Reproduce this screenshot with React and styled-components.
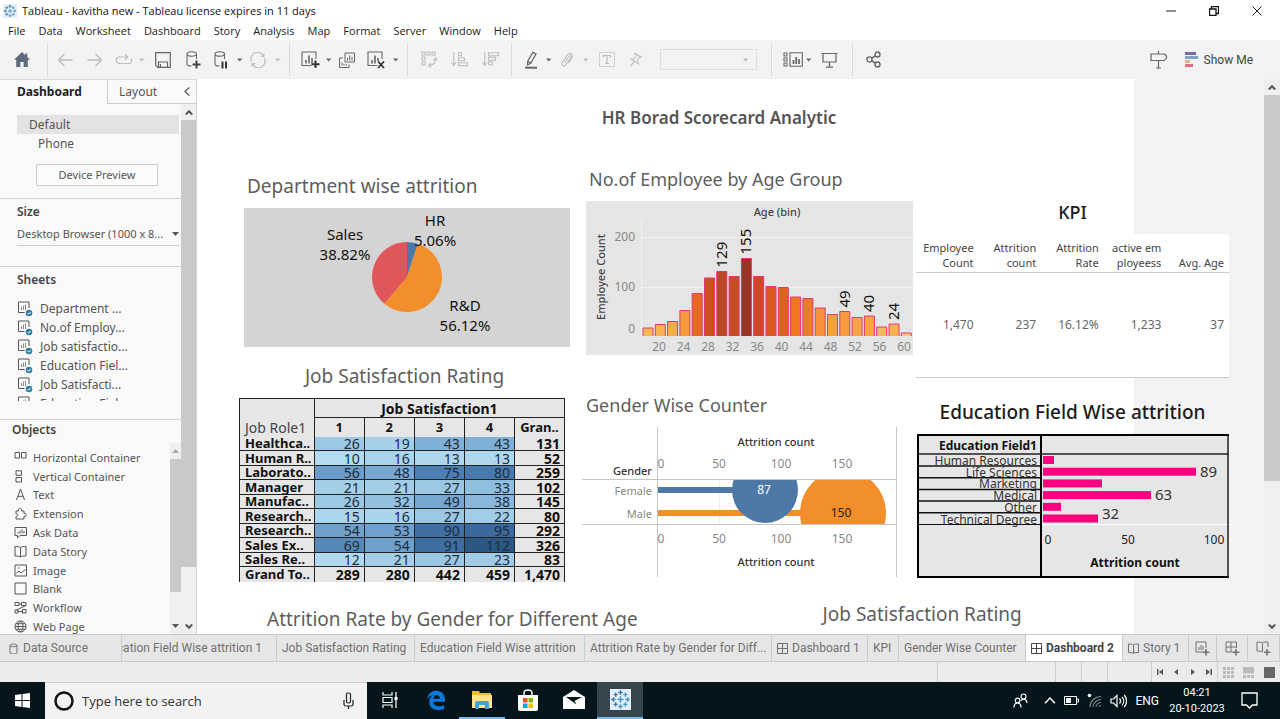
import React from "react";
import styled, { createGlobalStyle, css } from "styled-components";

const UI = `"Noto Sans", "Open Sans", sans-serif`;
const NARROW = `Roboto, "Liberation Sans", sans-serif`;

const GlobalStyle = createGlobalStyle`
  * { box-sizing: border-box; }
  html, body, #root { height: 100%; margin: 0; }
  body { font-family: ${UI}; font-size: 12px; color: #444; background: #fff; overflow: hidden; }
  button { font: inherit; color: inherit; background: none; border: 0; padding: 0; margin: 0; }
  h1, h2, h3, ul { margin: 0; padding: 0; font-weight: 400; }
  ul { list-style: none; }
  svg { display: block; flex: none; }
`;

const Window = styled.div`
  display: flex;
  flex-direction: column;
  height: 100vh;
`;

/* ---------- title bar and menu ---------- */

const TitleBar = styled.header`
  display: flex;
  align-items: center;
  height: 22px;
  padding: 0 4px 0 3px;
  gap: 5px;
  font-family: "Open Sans", sans-serif;
  font-size: 11px;
  line-height: 22px;
  color: #111;
`;

const TitleText = styled.span`
  flex: 1;
`;

const WindowButton = styled.button`
  display: flex;
  justify-content: center;
  width: 38px;
`;

const MenuBar = styled.nav`
  display: flex;
  height: 18px;
  padding-left: 8px;
  gap: 13px;
  font-family: "Open Sans", sans-serif;
  font-size: 11px;
  line-height: 18px;
  color: #222;
`;

/* ---------- toolbar ---------- */

const Toolbar = styled.div`
  display: flex;
  align-items: center;
  height: 39px;
  padding-right: 27px;
  background: #f3f3f3;
`;

const ToolButton = styled.button`
  display: flex;
  align-items: center;
  justify-content: center;
  width: ${(p) => p.$w}px;
  height: 30px;
  color: ${(p) => (p.$off ? "#bdbdbd" : "#666")};
`;

const Separator = styled.span`
  display: flex;
  justify-content: center;
  width: ${(p) => p.$w}px;
  height: 33px;
  &::before {
    content: "";
    width: 1px;
    background: #dadada;
  }
`;

const FitSelect = styled.select`
  appearance: none;
  width: 97px;
  height: 21px;
  margin: 0 -14px 0 13px;
  border: 1px solid #d6d6d6;
  background: #f3f3f3;
`;

const SelectCaret = styled.span`
  width: 18px;
  color: #b8b8b8;
  z-index: 1;
  pointer-events: none;
`;

const Spacer = styled.span`
  flex: 1;
`;

const ShowMe = styled.button`
  display: flex;
  align-items: center;
  gap: 6px;
  margin-left: 16px;
  font-family: ${NARROW};
  font-size: 12px;
  color: #444;
`;

/* ---------- body ---------- */

const Body = styled.div`
  display: flex;
  flex: 1;
  min-height: 0;
`;

const Sidebar = styled.aside`
  display: flex;
  flex-direction: column;
  width: 197px;
  border-right: 1px solid #d0d0d0;
  border-top: 1px solid #dcdcdc;
  background: #f9f9f9;
  color: #555;
`;

const SideTabs = styled.div`
  display: flex;
  height: 24px;
  flex: none;
`;

const SideTab = styled.button`
  padding-left: ${(p) => (p.$active ? 17 : 11)}px;
  width: ${(p) => (p.$active ? 107 : 70)}px;
  text-align: left;
  font-size: 12px;
  font-weight: ${(p) => (p.$active ? 700 : 400)};
  line-height: 22px;
  color: ${(p) => (p.$active ? "#222" : "#555")};
  ${(p) =>
    !p.$active &&
    css`
      border-left: 1px solid #ccc;
      border-bottom: 1px solid #ccc;
    `}
`;

const CollapseButton = styled.button`
  display: flex;
  align-items: center;
  justify-content: center;
  flex: 1;
  border-bottom: 1px solid #ccc;
`;

const SideScroll = styled.div`
  display: flex;
  flex: 1;
  min-height: 0;
`;

const SideContent = styled.div`
  display: flex;
  flex-direction: column;
  width: 181px;
  min-height: 0;
`;

const SideSection = styled.section`
  flex: none;
  height: ${(p) => p.$h}px;
  padding: ${(p) => p.$top}px 2px 0 17px;
  border-bottom: 1px solid #d0d0d0;
`;

const SideHeading = styled.h2`
  font-size: 12px;
  line-height: 20px;
  font-weight: 600;
  color: #444;
`;

const DeviceRow = styled.button`
  display: block;
  width: 100%;
  height: 19px;
  line-height: 19px;
  padding-left: ${(p) => (p.$active ? 12 : 21)}px;
  text-align: left;
  background: ${(p) => (p.$active ? "#e3e3e3" : "none")};
`;

const PreviewButton = styled.button`
  display: block;
  width: 122px;
  height: 22px;
  margin: 11px 0 0 19px;
  border: 1px solid #ccc;
  border-radius: 1px;
  background: #fcfcfc;
  font-size: 11px;
  line-height: 18px;
`;

const SizeField = styled.div`
  display: flex;
  align-items: center;
  height: 24px;
  border-bottom: 1px solid #ccc;
`;

const SizeSelect = styled.select`
  appearance: none;
  flex: 1;
  min-width: 0;
  border: 0;
  padding: 0;
  background: none;
  font-family: ${UI};
  font-size: 11px;
  color: #555;
`;

const SheetList = styled.ul`
  height: 102px;
  margin-top: 9px;
  overflow: hidden;
`;

const SheetItem = styled.li`
  display: flex;
  align-items: center;
  height: 19px;
  gap: 7px;
  line-height: 19px;
`;

const Objects = styled.section`
  display: flex;
  flex: 1;
  min-height: 0;
`;

const ObjectsMain = styled.div`
  flex: 1;
  padding-left: 12px;
  overflow: hidden;
`;

const ObjectList = styled.ul`
  display: grid;
  grid-auto-rows: 1fr;
  height: 188px;
  margin-top: 8px;
`;

const ObjectItem = styled.li`
  display: flex;
  align-items: center;
  padding-left: 2px;
  gap: 6px;
  font-size: 11px;
  line-height: 15px;
`;

const ScrollTrack = styled.div`
  display: flex;
  flex-direction: column;
  width: ${(p) => p.$w}px;
  margin-top: ${(p) => p.$top || 0}px;
  background: #efefef;
`;

const ScrollArrow = styled.button`
  display: flex;
  align-items: center;
  justify-content: center;
  height: 16px;
  color: #555;
`;

const ScrollThumb = styled.div`
  flex: ${(p) => p.$size};
  background: #c9c9c9;
`;

const ScrollRest = styled.div`
  flex: ${(p) => p.$size};
`;

/* ---------- dashboard ---------- */

const Canvas = styled.main`
  flex: 1;
  min-width: 0;
  padding: 0 35px 0 42px;
  overflow: hidden;
  background: linear-gradient(to right, #fff 87.8%, #f3f3f3 87.8%);
`;

const DashTitle = styled.h1`
  padding: 26px 30px 0 0;
  text-align: center;
  font-size: 17px;
  line-height: 26px;
  font-weight: 600;
  color: #555;
`;

const Columns = styled.div`
  display: grid;
  grid-template-columns: 343fr 334fr 313fr;
  height: 461px;
`;

const Column = styled.div`
  padding: ${(p) => p.$top}px ${(p) => p.$right}px 0 0;
  min-width: 0;
`;

const SheetTitle = styled.h2`
  height: 44px;
  padding-left: ${(p) => p.$indent || 0}px;
  margin-top: ${(p) => p.$gap || 0}px;
  text-align: ${(p) => (p.$center ? "center" : "left")};
  font-size: ${(p) => (p.$small ? 18 : 19)}px;
  line-height: 44px;
  font-weight: ${(p) => (p.$strong ? 500 : 400)};
  color: ${(p) => (p.$strong ? "#1c1c1c" : "#5e5e5e")};
  white-space: nowrap;
`;

const Chart = styled.svg`
  width: 100%;
  height: auto;
  font-family: ${UI};
`;

const ChartCard = styled.div`
  padding-left: ${(p) => p.$left}px;
`;

const KpiTable = styled.table`
  width: 100%;
  table-layout: fixed;
  border-collapse: collapse;
  background: #fff;
  font-size: 12px;
  line-height: 15px;
  color: #444;
  border-bottom: 1px solid #ccc;
  th, td {
    padding: 0 5px 0 0;
    text-align: right;
    font-weight: 400;
  }
  th {
    height: 38px;
    padding-bottom: 2px;
    vertical-align: bottom;
    border-bottom: 1px solid #ccc;
    font-size: 11px;
    white-space: pre-line;
  }
  td { height: 105px; color: #666; }
`;

const RatingTable = styled.table`
  width: calc(100% - 5px);
  table-layout: fixed;
  border-collapse: collapse;
  background: #e6e6e6;
  font-size: 14px;
  line-height: 13px;
  color: #222;
  th, td {
    height: 14px;
    padding: 0 4px 0 0;
    border: 1px solid #222;
    text-align: right;
    white-space: nowrap;
  }
  tbody tr:nth-child(even) th, tbody tr:nth-child(even) td { height: 15px; }
  thead th { height: 19px; text-align: center; padding: 0; font-size: 13px; font-weight: 700; color: #111; }
  thead th[colspan] { font-size: 14px; }
  tbody th { padding: 0 0 0 5px; text-align: left; font-size: 13px; font-weight: 700; color: #111; }
  tbody tr:first-child th, tbody tr:first-child td { border-top: 0; }
  tbody tr:last-child th, tbody tr:last-child td { border-bottom: 0; }
  thead tr:last-child th { border-bottom: 0; }
  thead th:first-child[rowspan] {
    vertical-align: bottom;
    text-align: left;
    padding: 0 0 3px 5px;
    font-size: 14px;
    font-weight: 400;
    color: #444;
    border-bottom: 0;
  }
`;

const RatingCell = styled.td`
  background: ${(p) => p.$bg};
  color: #1e2c3c;
`;

const TotalCell = styled.td`
  font-weight: 700;
  color: #111;
`;

const LowerTitles = styled.div`
  display: flex;
  gap: 185px;
  padding-left: 28px;
`;

/* ---------- sheet tabs and status ---------- */

const SheetTabs = styled.div`
  display: grid;
  grid-template-columns: 122fr 155fr 138fr 170fr 187fr 96fr 31fr 127fr 97fr 66fr 28fr 31fr 32fr;
  height: 28px;
  flex: none;
  border-top: 1px solid #c8c8c8;
  border-bottom: 1px solid #c8c8c8;
  background: #e6e6e6;
  font-family: ${NARROW};
  font-size: 12px;
  color: #666;
`;

const SheetTab = styled.button`
  display: flex;
  align-items: center;
  justify-content: ${(p) => (p.$clip ? "flex-end" : p.$iconOnly ? "center" : "flex-start")};
  min-width: 0;
  gap: 4px;
  padding: 0 ${(p) => (p.$clip ? 14 : 0)}px 0 ${(p) => (p.$iconOnly || p.$clip ? 0 : p.$first ? 8 : 5)}px;
  overflow: hidden;
  white-space: nowrap;
  border-right: 1px solid #cacaca;
  background: ${(p) => (p.$active ? "#fff" : "none")};
  font-weight: ${(p) => (p.$active ? 700 : 400)};
  color: ${(p) => (p.$active ? "#444" : "#707070")};
`;

const StatusBar = styled.div`
  display: flex;
  justify-content: flex-end;
  height: 20px;
  flex: none;
  background: #ebebeb;
  color: #555;
`;

const StatusCell = styled.div`
  display: flex;
  align-items: center;
  justify-content: space-around;
  width: ${(p) => p.$w}px;
  border-left: 1px solid #cfcfcf;
`;

/* ---------- taskbar ---------- */

const Taskbar = styled.footer`
  display: flex;
  align-items: stretch;
  height: 37px;
  flex: none;
  background: #04151b;
  color: #fff;
`;

const StartButton = styled.button`
  display: flex;
  align-items: center;
  justify-content: center;
  width: 45px;
`;

const SearchBox = styled.label`
  display: flex;
  align-items: center;
  width: 322px;
  padding: 0 12px 0 9px;
  gap: 8px;
  border-top: 1px solid #ccc;
  background: #f2f2f2;
`;

const SearchInput = styled.input`
  flex: 1;
  min-width: 0;
  border: 0;
  padding: 0;
  background: none;
  font-family: "Open Sans", sans-serif;
  font-size: 13px;
  &::placeholder { color: #333; opacity: 1; }
`;

const TaskButton = styled.button`
  display: flex;
  align-items: center;
  justify-content: center;
  width: 46px;
  border-bottom: 2px solid ${(p) => (p.$open ? "#76b9ed" : "transparent")};
  background: ${(p) => (p.$active ? "#36464c" : "none")};
  background-clip: padding-box;
`;

const Tray = styled.div`
  display: flex;
  align-items: center;
  gap: 8px;
  padding-right: 22px;
  font-family: ${NARROW};
  font-size: 12px;
`;

const Clock = styled.time`
  width: 58px;
  margin: 0 7px 0 1px;
  text-align: center;
  font-size: 11px;
  line-height: 16px;
`;

/* ---------- icons ---------- */

const Icon = ({ w = 18, h = w, children, sw = 1, fill = "none" }) => (
  <svg width={w} height={h} viewBox={`0 0 ${w} ${h}`} fill={fill} stroke="currentColor" strokeWidth={sw} aria-hidden="true">
    {children}
  </svg>
);

const Caret = () => (
  <Icon w={6} h={4}><path d="M0 .5h5.4L2.7 3.6z" fill="currentColor" stroke="none" /></Icon>
);

const crosses = [[8, 8, 2.4], [8, 2.6, 1.7], [8, 13.4, 1.7], [2.6, 8, 1.7], [13.4, 8, 1.7], [4.3, 4.3, 1.6], [11.7, 4.3, 1.6], [4.3, 11.7, 1.6], [11.7, 11.7, 1.6]];
const TableauLogo = ({ size = 14 }) => (
  <svg width={size} height={size} viewBox="0 0 16 16" aria-hidden="true">
    <rect width="16" height="16" fill="#e4eef6" />
    {crosses.map(([x, y, r], i) => (
      <path key={i} d={`M${x - r} ${y}h${2 * r}M${x} ${y - r}v${2 * r}`} stroke={i % 2 ? "#3f7ca8" : "#4a98c9"} strokeWidth="1.1" />
    ))}
  </svg>
);

const HomeIcon = () => (
  <Icon w={18} h={16}><path d="M9 0 1 7.8h2.2V15h4.2v-5h3.2v5h4.2V7.8H17L14.300 5.100V1.500h-2v1.700z" fill="#5d6b7c" stroke="none" /></Icon>
);
const BackIcon = () => <Icon w={16} h={14} sw={1.4}><path d="M15.500 7H1.500M7.500 1 1.500 7l6 6" /></Icon>;
const ForwardIcon = () => <Icon w={16} h={14} sw={1.4}><path d="M.5 7h14M8.500 1l6 6-6 6" /></Icon>;
const ReplayIcon = () => (
  <Icon w={18} h={12} sw={1.2}><path d="M12 3H4.500a3.200 3.200 0 0 0 0 6.500H14a3 3 0 0 0 2-5M10 .5 12.600 3 10 5.500" /></Icon>
);
const SaveIcon = () => (
  <Icon w={16} sw={1.200}><path d="M.7.7h14.600v14.600H2.700L.7 13.300zM3.500 15v-5h9v5M5.500 12v3M.7 13.300l2 2" /></Icon>
);
const DbPath = "M1 3c0-3 9.500-3 9.500 0s-9.500 3-9.500 0v10c0 1.200 2 2 4.500 2M10.500 3v5";
const DbAddIcon = () => (
  <Icon w={15} h={18} sw={1.1}><path d={DbPath} /><path d="M10.500 9.500v8M6.500 13.500h8" stroke="#444" strokeWidth="2" /></Icon>
);
const DbPauseIcon = () => (
  <Icon w={14} h={18} sw={1.1}><path d={DbPath} /><path d="M8.500 10.500v7M12 10.500v7" stroke="#333" strokeWidth="2" /></Icon>
);
const RefreshIcon = () => (
  <Icon w={16} sw={1.2}><path d="M1.500 9.500A6.500 6.500 0 0 1 13.500 4M14.500 6.500A6.500 6.500 0 0 1 2.500 12" /><path d="M14.500 1v4h-4zM1.500 15v-4h4z" fill="currentColor" stroke="none" /></Icon>
);
const NewSheetIcon = () => (
  <Icon w={19} h={18} sw={1.1}><path d="M15 8V1H1v13.500h9.500" /><path d="M5 12.500V9M8 12.500V4.500M11 12.500V7" strokeWidth="1.600" /><path d="M14.500 9.500v7.500M10.500 13.300h8" stroke="#333" strokeWidth="2" /></Icon>
);
const DuplicateIcon = () => (
  <Icon w={16} sw={1}><path d="M6 1h9.500v9H6zM4 6H.5v9.500h9.500v-3" /><path d="M8.500 8.500V6M10.700 8.500V3.500M13 8.500V5M3 13.500v-3M5 13.500v-1.500M7.300 13.500v-1.500" /></Icon>
);
const ClearIcon = () => (
  <Icon w={19} h={18} sw={1.1}><path d="M15 8V1H1v13.500h9.500" /><path d="M5 12.500V9M8 12.500V4.500M11 10V7" strokeWidth="1.600" /><path d="M11 10.500l6 6.500M17 10.500 11 17" stroke="#333" strokeWidth="1.800" /></Icon>
);
const SwapIcon = () => (
  <Icon w={17} h={17} sw={1.1}><path d="M1 1h3v3H1zM6 1h3v3H6zM11 1h3v3h-3zM1 6h3v3H1zM1 11h3v3H1z" /><path d="M14.500 7.500c.5 4-2 6.500-6.500 7M12.300 9.500l2.200-2.300L16.500 9.500M10 12l-2.500 2.500L10 16.500" /></Icon>
);
const SortAscIcon = () => (
  <Icon w={17} h={15} sw={1.1}><path d="M2.800 0v14M.5 10.500l2.300 3 2.300-3M7.500.7h3v3h-3zM7.500 5.700h6v3h-6zM7.500 10.700h9v3h-9z" /></Icon>
);
const SortDescIcon = () => (
  <Icon w={17} h={15} sw={1.1}><path d="M2.800 0v14M.5 10.500l2.300 3 2.300-3M6.500.7h10v3h-10zM6.500 5.200h7v3h-7zM6.500 9.700h4v3h-4z" /></Icon>
);
const HighlightIcon = () => (
  <Icon w={14} h={18} sw={1.2}><path d="M9 1.200 12 3l-5 9-3.500 2 .3-4zM3.800 10l3.200 2" /><path d="M1 16.700h12" strokeWidth="2" /></Icon>
);
const ClipIcon = () => (
  <Icon w={14} h={16} sw={1.1}><path d="M4.500 10.500 9 4.300c1-1.300 2.800-.2 1.900 1.200l-5.200 7.300c-1.600 2.200-5 .2-3.500-2.300L7.500 2.800c2-2.900 6.300-.6 4.500 2.500L8.500 11" /></Icon>
);
const LabelIcon = () => (
  <Icon w={16} h={15}><path d="M.5.5h15v14H.5z" strokeDasharray="2 1" /><path d="M4.500 5.500v-2h7v2M8 3.500v8M6 11.500h4" strokeWidth="1.200" /></Icon>
);
const PinIcon = () => (
  <Icon w={13} h={16} sw={1.1}><path d="M5.500 1 12 5l-1.800.3L8.500 8l.8 3.500L2 7l3.200-.5L7 3.500zM5.500 9.200 1.500 14.500" /></Icon>
);
const CardsIcon = () => (
  <Icon w={20} h={15} sw={1.1}><path d="M1 1h3v3H1zM1 6h3v3H1zM1 11h3v3H1zM7 .7h12.300v13.600H7z" /><path d="M10.500 12V8M13.200 12V5M16 12V7" strokeWidth="1.700" /></Icon>
);
const PresentIcon = () => (
  <Icon w={17} h={16} sw={1.2}><path d="M.5 1.500h16M2 1.500v8.500h13V1.500M8.500 10v5M5 15.200h7" /></Icon>
);
const ShareIcon = () => (
  <Icon w={15} h={17} sw={1.4}><circle cx="3.500" cy="8.500" r="2.600" /><circle cx="11.500" cy="3.500" r="2.500" /><circle cx="11.500" cy="13.500" r="2.500" /><path d="M5.700 7.200 9.400 4.800M5.700 9.800l3.700 2.400" /></Icon>
);
const GuideIcon = () => (
  <Icon w={18} h={18} sw={1.200}><path d="M1 3h13c3.500 1 3.500 5 0 6.500H1zM8.500 0v3M8.500 9.500v7M6 17h5" /></Icon>
);
const ShowMeIcon = () => (
  <Icon w={13} h={15}><g stroke="none"><path d="M0 0h11v3H0z" fill="#7b6a99" /><path d="M0 4h13v3H0z" fill="#7da4cf" /><path d="M0 8h5v3H0z" fill="#f0ae90" /><path d="M0 12h8v3H0z" fill="#ed6a78" /></g></Icon>
);
const Chevron = ({ up, small }) => (
  <Icon w={small ? 8 : 12} h={small ? 5 : 7} sw={small ? 2 : 1.4}>
    <path d={small ? (up ? "M.8 4.500 4 1.200l3.200 3.300" : "M.8.5 4 3.800 7.200.5") : "M1 6.200 6 1l5 5.200"} />
  </Icon>
);
const SmallTriangle = ({ up, faint }) => (
  <Icon w={7} h={4}><path d={up ? "M0 4h7L3.500 0z" : "M0 0h7L3.500 4z"} fill={faint ? "#a8a8a8" : "currentColor"} stroke="none" /></Icon>
);

const SheetIcon = () => (
  <Icon w={16} h={16}>
    <path d="M12 7V1H1.500v10.500h6" /><path d="M4.500 9V6M6.500 9V4.500M8.500 9V3.500" stroke="#8a8a8a" />
    <circle cx="12" cy="12" r="3.300" fill="#2f7f9f" stroke="none" /><path d="m10.500 12 1.200 1.200 2-2.200" stroke="#fff" />
  </Icon>
);

const objectIcons = {
  horizontal: <path d="M1 1.500h4.500v5.500H1zM7.500 1.500H12v5.500H7.500z" />,
  vertical: <path d="M2 .8h5.500v4.500H2zM2 7.500h5.500V12H2z" />,
  text: <path d="M2.500 12 6.500 1l4 11M4 8.300h5" />,
  extension: <path d="M2 4h2.500c-1-3.500 4-3.500 3 0H10v2.500c3-.8 3 3.500 0 2.800V12H2V9.500c2.200.3 2.200-2.800 0-2.500z" />,
  ask: <path d="M1 1.500h11.500v8H6L3.500 12V9.500H1zM4 7.500V6M6 7.500V4.500M8 7.500V3.500M10 7.500V5" />,
  story: <path d="M1 1.500c2 0 4.500 0 5.500 1 1-1 3.500-1 5.500-1v9.500c-2 0-4.500 0-5.500 1-1-1-3.500-1-5.500-1zM6.500 2.500V12" />,
  image: <path d="M1 1h11.500v11H1zM2.500 9.500 5 7l2 2 4.500-3.500M4 4h1.500" />,
  blank: <path d="M1 1h11v11H1z" />,
  workflow: <path d="M1 1.500h4v3H1zM7.500 1.500h4.500v3H7.500zM1 9h3v3H1zM8.500 8.500H12V12H8.500zM5 3h2.500M12 4.500 2.500 9M4 10.500h4.500" />,
  web: <path d="M6.500 1a5.500 5.500 0 1 0 .01 0M1 6.500h11M6.500 1c-3.500 3.500-3.500 7.500 0 11M6.500 1c3.500 3.500 3.500 7.500 0 11M2 3.700h9M2 9.300h9" />,
};

const tabIcons = {
  data: <path d="M2 2.500c0-2 7-2 7 0v7c0 2-7 2-7 0zc0 1.500 7 1.500 7 0" />,
  dash: <path d="M.5.500h10v10H.5zM5.500.5v10M.5 5.500h10" />,
  story: <path d="M.5 1c2 0 4 0 5 1 1-1 3-1 5-1v8.500c-2 0-4 0-5 1-1-1-3-1-5-1zM5.500 2v8.500" />,
};

const addIcons = {
  sheet: <path d="M11 7V1H1v10h7M4 9V6M6 9V4M8 9V5" />,
  dash: <path d="M11.500 7V1H1v10h7.500M6 1v10M1 6h10.500" />,
  story: <path d="M12 6V1C9 1 7 1 6.500 2 5.500 1 3 1 1 1v9c2 0 4.500 0 5.500 1M6.500 2v9" />,
};

/* ---------- charts ---------- */

const sliceData = [
  { name: "HR", share: 0.0506, color: "#4e79a7" },
  { name: "R&D", share: 0.5612, color: "#f28e2b" },
  { name: "Sales", share: 0.3882, color: "#e15759" },
];

function PieChart() {
  const cx = 163, cy = 69, r = 35;
  let from = 0;
  const at = (t) => [cx + r * Math.sin(2 * Math.PI * t), cy - r * Math.cos(2 * Math.PI * t)].map((v) => v.toFixed(2)).join(" ");
  const label = (x, y, a, b) => (
    <text x={x} y={y} textAnchor="middle" fontSize="15" fill="#111">
      {a}<tspan x={x} dy="20">{b}</tspan>
    </text>
  );
  return (
    <Chart viewBox="0 0 326 139" role="img" aria-label="Department wise attrition">
      <rect width="326" height="139" fill="#d4d4d4" />
      {sliceData.map((s) => {
        const to = from + s.share;
        const d = `M${cx} ${cy}L${at(from)}A${r} ${r} 0 ${s.share > 0.5 ? 1 : 0} 1 ${at(to)}z`;
        from = to;
        return <path key={s.name} d={d} fill={s.color} />;
      })}
      {label(191, 18, "HR", "5.06%")}
      {label(101, 32, "Sales", "38.82%")}
      {label(221, 103, "R&D", "56.12%")}
    </Chart>
  );
}

const ageBins = [
  [16, "#f8b654"], [23, "#f8b252"], [29, "#f8ab4c"], [51, "#f7983a"], [85, "#e8681f"], [116, "#cd4f20"],
  [129, "#bc4625"], [119, "#c64d24"], [155, "#9a3525"], [119, "#cf4826"], [99, "#da5820"], [97, "#df6121"],
  [78, "#ee771f"], [75, "#ee7a28"], [56, "#f89137"], [43, "#f99f42"], [49, "#f89b3f"], [37, "#f8a547"],
  [40, "#f8a444"], [18, "#fab75c"], [24, "#f9b252"], [6, "#fcc878"],
];

function AgeChart() {
  return (
    <Chart viewBox="0 0 327 154" role="img" aria-label="Number of employees by age group">
      <rect width="327" height="154" fill="#e5e5e5" />
      <path d="M55.500 18V135M55 36.500H327M55 86.500H327" stroke="#f2f2f2" />
      <text x="191" y="15" textAnchor="middle" fontSize="11" fontWeight="500" fill="#444">Age (bin)</text>
      <text transform="translate(19 76) rotate(-90)" textAnchor="middle" fontSize="11" fontWeight="500" fill="#444">Employee Count</text>
      <g fontSize="12" fill="#888" textAnchor="end">
        <text x="49" y="40">200</text><text x="49" y="90">100</text><text x="49" y="132">0</text>
      </g>
      {ageBins.map(([n, color], i) => {
        const x = 57 + i * 12.3, h = n / 2;
        return (
          <g key={i}>
            <rect x={x} y={135 - h} width="10" height={h} fill={color} />
            <path d={`M${x} 135V${135 - h}h10V135`} fill="none" stroke="#e2377a" />
            {[129, 155, 49, 40, 24].includes(n) && (
              <text transform={`translate(${x + 10} ${131 - h}) rotate(-90)`} fontSize="15" fill="#111">{n}</text>
            )}
          </g>
        );
      })}
      <g fontSize="12" fill="#888" textAnchor="middle">
        {[20, 24, 28, 32, 36, 40, 44, 48, 52, 56, 60].map((a, i) => (
          <text key={a} x={73 + i * 24.5} y="150">{a}</text>
        ))}
      </g>
    </Chart>
  );
}

function GenderChart() {
  const ticks = (y) => (
    <g fontSize="12" fill="#888" textAnchor="middle">
      <text x="79" y={y}>0</text><text x="137" y={y}>50</text><text x="199" y={y}>100</text><text x="260" y={y}>150</text>
    </g>
  );
  return (
    <Chart viewBox="0 0 331 150" role="img" aria-label="Attrition count by gender">
      <clipPath id="rows"><rect x="75" y="52" width="240" height="45" /></clipPath>
      <path d="M137.500 52v45M199.500 52v45M261.500 52v45" stroke="#eee" />
      <g clipPath="url(#rows)">
        <rect x="76" y="60" width="90" height="6" fill="#4e79a7" />
        <rect x="76" y="83" width="180" height="6" fill="#f28e2b" />
        <circle cx="183" cy="63" r="33" fill="#4e79a7" />
        <circle cx="261" cy="86" r="43" fill="#f28e2b" />
      </g>
      <path d="M75.500 0v150M314.500 0v150M0 52.500h314M0 97.500h314" stroke="#c6c6c6" fill="none" />
      <g fontSize="11" fontWeight="500" fill="#333">
        <text x="194" y="19" textAnchor="middle">Attrition count</text>
        <text x="194" y="139" textAnchor="middle">Attrition count</text>
        <text x="70" y="48" textAnchor="end">Gender</text>
      </g>
      {ticks(41)}{ticks(116)}
      <g fontSize="11" fill="#888" textAnchor="end"><text x="70" y="68">Female</text><text x="70" y="91">Male</text></g>
      <text x="182" y="67" fontSize="12" fill="#fff" textAnchor="middle">87</text>
      <text x="259" y="90" fontSize="12" fill="#222" textAnchor="middle">150</text>
    </Chart>
  );
}

const fields = [
  ["Human Resources", 11], ["Life Sciences", 153, 89], ["Marketing", 59], ["Medical", 108, 63], ["Other", 18], ["Technical Degree", 55, 32],
];

function EducationChart() {
  return (
    <Chart viewBox="0 0 313 144" role="img" aria-label="Education field wise attrition">
      <rect x="2" width="311" height="144" fill="#e6e6e6" />
      <text x="121" y="16" fontSize="12" fontWeight="700" fill="#111" textAnchor="end">Education Field1</text>
      <path d="M126 90.500H313" stroke="#fff" />
      {fields.map(([name, w, n], i) => {
        const y = 20 + i * 11.7;
        return (
          <g key={name}>
            <text x="121" y={y + 11} fontSize="12" fill="#333" textAnchor="end">{name}</text>
            <path d={`M3 ${y + 12}H126`} stroke="#111" strokeWidth={i === 5 ? 1 : 1.5} />
            <rect x="127" y={y + 2} width={w} height="8" fill="#ff007f" />
            {n && <text x={131 + w} y={y + (i === 5 ? 6 : 11)} fontSize="15" fill="#333">{n}</text>}
          </g>
        );
      })}
      <path d="M2 1H313M2 143H313M2 0V144M125 0V144" stroke="#000" strokeWidth="2" />
      <path d="M312 1V144M3 20H313" stroke="#222" strokeWidth="1.500" />
      <g fontSize="12" fill="#222" textAnchor="middle">
        <text x="132" y="110">0</text><text x="212" y="110">50</text><text x="298" y="110">100</text>
      </g>
      <text x="219" y="133" fontSize="12" fontWeight="700" fill="#111" textAnchor="middle">Attrition count</text>
    </Chart>
  );
}

/* ---------- rating table ---------- */

const stops = [[10, 179, 219, 240], [30, 148, 195, 226], [50, 117, 165, 208], [75, 78, 127, 179], [95, 58, 105, 158], [112, 42, 87, 131]];
function heat(n) {
  const i = Math.max(0, stops.findIndex((s) => n <= s[0]) - 1);
  const a = stops[i], b = stops[i + 1];
  const t = (n - a[0]) / (b[0] - a[0]);
  return `rgb(${[1, 2, 3].map((k) => Math.round(a[k] + t * (b[k] - a[k]))).join(",")})`;
}

const ratingRows = [
  ["Healthca..", 26, 19, 43, 43, 131],
  ["Human R..", 10, 16, 13, 13, 52],
  ["Laborato..", 56, 48, 75, 80, 259],
  ["Manager", 21, 21, 27, 33, 102],
  ["Manufac..", 26, 32, 49, 38, 145],
  ["Research..", 15, 16, 27, 22, 80],
  ["Research..", 54, 53, 90, 95, 292],
  ["Sales Ex..", 69, 54, 91, 112, 326],
  ["Sales Re..", 12, 21, 27, 23, 83],
];

const RoleCol = styled.col`
  width: 23%;
`;

function Ratings() {
  return (
    <RatingTable>
      <colgroup><RoleCol /><col /><col /><col /><col /><col /></colgroup>
      <thead>
        <tr><th rowSpan={2}>Job Role1</th><th colSpan={5}>Job Satisfaction1</th></tr>
        <tr><th>1</th><th>2</th><th>3</th><th>4</th><th>Gran..</th></tr>
      </thead>
      <tbody>
        {ratingRows.map(([role, ...v], i) => (
          <tr key={i}>
            <th scope="row">{role}</th>
            {v.slice(0, 4).map((n, k) => <RatingCell key={k} $bg={heat(n)}>{n}</RatingCell>)}
            <TotalCell>{v[4]}</TotalCell>
          </tr>
        ))}
        <tr>
          <th scope="row">Grand To..</th>
          {["289", "280", "442", "459", "1,470"].map((n) => <TotalCell key={n}>{n}</TotalCell>)}
        </tr>
      </tbody>
    </RatingTable>
  );
}

/* ---------- sections ---------- */

const Tool = ({ w, off, label, children }) => (
  <ToolButton $w={w} $off={off} aria-label={label}>{children}</ToolButton>
);

function MainToolbar() {
  return (
    <Toolbar>
      <Tool w={44} label="Start page"><HomeIcon /></Tool>
      <Separator $w={6} />
      <Tool w={30} off label="Undo"><BackIcon /></Tool>
      <Tool w={30} off label="Redo"><ForwardIcon /></Tool>
      <Tool w={28} off label="Replay"><ReplayIcon /></Tool>
      <Tool w={8} off label="Replay options"><Caret /></Tool>
      <Tool w={34} label="Save"><SaveIcon /></Tool>
      <Tool w={26} label="New data source"><DbAddIcon /></Tool>
      <Tool w={30} label="Pause updates"><DbPauseIcon /></Tool>
      <Tool w={8} label="Pause options"><Caret /></Tool>
      <Tool w={28} off label="Refresh"><RefreshIcon /></Tool>
      <Tool w={12} off label="Refresh options"><Caret /></Tool>
      <Separator $w={11} />
      <Tool w={30} label="New worksheet"><NewSheetIcon /></Tool>
      <Tool w={8} label="New options"><Caret /></Tool>
      <Tool w={28} label="Duplicate"><DuplicateIcon /></Tool>
      <Tool w={31} label="Clear sheet"><ClearIcon /></Tool>
      <Tool w={8} label="Clear options"><Caret /></Tool>
      <Separator $w={14} />
      <Tool w={30} off label="Swap"><SwapIcon /></Tool>
      <Tool w={31} off label="Sort ascending"><SortAscIcon /></Tool>
      <Tool w={30} off label="Sort descending"><SortDescIcon /></Tool>
      <Separator $w={12} />
      <Tool w={28} label="Highlight"><HighlightIcon /></Tool>
      <Tool w={8} label="Highlight options"><Caret /></Tool>
      <Tool w={28} off label="Group"><ClipIcon /></Tool>
      <Tool w={10} off label="Group options"><Caret /></Tool>
      <Tool w={32} off label="Show labels"><LabelIcon /></Tool>
      <Tool w={24} off label="Fix axes"><PinIcon /></Tool>
      <FitSelect aria-label="Fit" disabled><option> </option></FitSelect>
      <SelectCaret><Caret /></SelectCaret>
      <Separator $w={20} />
      <Tool w={24} label="Show cards"><CardsIcon /></Tool>
      <Tool w={8} label="Card options"><Caret /></Tool>
      <Tool w={32} label="Presentation mode"><PresentIcon /></Tool>
      <Separator $w={14} />
      <Tool w={28} label="Share"><ShareIcon /></Tool>
      <Spacer />
      <Tool w={20} label="Guide"><GuideIcon /></Tool>
      <ShowMe><ShowMeIcon />Show Me</ShowMe>
    </Toolbar>
  );
}

const sheets = ["Department ...", "No.of Employ...", "Job satisfactio...", "Education Fiel...", "Job Satisfacti...", "Education Fiel..."];
const objects = [
  ["horizontal", "Horizontal Container"], ["vertical", "Vertical Container"], ["text", "Text"], ["extension", "Extension"],
  ["ask", "Ask Data"], ["story", "Data Story"], ["image", "Image"], ["blank", "Blank"], ["workflow", "Workflow"], ["web", "Web Page"],
];

function SidePanel() {
  return (
    <Sidebar>
      <SideTabs>
        <SideTab $active>Dashboard</SideTab>
        <SideTab>Layout</SideTab>
        <CollapseButton aria-label="Collapse pane"><Icon w={6} h={9} sw={1.200}><path d="M5.300.5 1 4.500l4.300 4" /></Icon></CollapseButton>
      </SideTabs>
      <SideScroll>
        <SideContent>
          <SideSection $h={95} $top={11}>
            <DeviceRow $active>Default</DeviceRow>
            <DeviceRow>Phone</DeviceRow>
            <PreviewButton>Device Preview</PreviewButton>
          </SideSection>
          <SideSection $h={68} $top={3}>
            <SideHeading as="label" htmlFor="size">Size</SideHeading>
            <SizeField>
              <SizeSelect id="size"><option>Desktop Browser (1000 x 8...</option></SizeSelect>
              <SmallTriangle />
            </SizeField>
          </SideSection>
          <SideSection $h={153} $top={3}>
            <SideHeading>Sheets</SideHeading>
            <SheetList>
              {sheets.map((s, i) => <SheetItem key={i}><SheetIcon />{s}</SheetItem>)}
            </SheetList>
          </SideSection>
          <Objects>
            <ObjectsMain>
              <SideHeading>Objects</SideHeading>
              <ObjectList>
                {objects.map(([k, name]) => <ObjectItem key={k}><Icon w={13}>{objectIcons[k]}</Icon>{name}</ObjectItem>)}
              </ObjectList>
            </ObjectsMain>
            <ScrollTrack $w={11} $top={23}>
              <ScrollArrow aria-label="Scroll up"><SmallTriangle up faint /></ScrollArrow>
              <ScrollThumb $size={133} /><ScrollRest $size={26} />
              <ScrollArrow aria-label="Scroll down"><SmallTriangle /></ScrollArrow>
            </ScrollTrack>
          </Objects>
        </SideContent>
        <ScrollTrack $w={15}>
          <ScrollArrow aria-label="Scroll up"><Chevron up small /></ScrollArrow>
          <ScrollThumb $size={447} /><ScrollRest $size={51} />
          <ScrollArrow aria-label="Scroll down"><Chevron small /></ScrollArrow>
        </ScrollTrack>
      </SideScroll>
    </Sidebar>
  );
}

function Dashboard() {
  return (
    <Canvas>
      <DashTitle>HR Borad Scorecard Analytic</DashTitle>
      <Columns>
        <Column $top={33} $right={12}>
          <SheetTitle $indent={8}>Department wise attrition</SheetTitle>
          <ChartCard $left={5}><PieChart /></ChartCard>
          <SheetTitle $gap={7} $center>Job Satisfaction Rating</SheetTitle>
          <Ratings />
        </Column>
        <Column $top={26} $right={3}>
          <SheetTitle $small $indent={7}>No.of Employee by Age Group</SheetTitle>
          <ChartCard $left={4}><AgeChart /></ChartCard>
          <SheetTitle $small $gap={28} $indent={4}>Gender Wise Counter</SheetTitle>
          <GenderChart />
        </Column>
        <Column $top={59} $right={0}>
          <SheetTitle $small $center $strong>KPI</SheetTitle>
          <KpiTable>
            <thead>
              <tr>
                <th>{"Employee\nCount"}</th><th>{"Attrition\ncount"}</th><th>{"Attrition\nRate"}</th><th>{"active em\nployeess"}</th><th>Avg. Age</th>
              </tr>
            </thead>
            <tbody><tr><td>1,470</td><td>237</td><td>16.12%</td><td>1,233</td><td>37</td></tr></tbody>
          </KpiTable>
          <SheetTitle $gap={12} $center $strong>Education Field Wise attrition</SheetTitle>
          <EducationChart />
        </Column>
      </Columns>
      <LowerTitles>
        <SheetTitle $gap={5}>Attrition Rate by Gender for Different Age</SheetTitle>
        <SheetTitle>Job Satisfaction Rating</SheetTitle>
      </LowerTitles>
    </Canvas>
  );
}

const tabs = [
  { name: "Data Source", icon: "data", first: true },
  { name: "Education Field Wise attrition 1", clip: true },
  { name: "Job Satisfaction Rating" },
  { name: "Education Field Wise attrition" },
  { name: "Attrition Rate by Gender for Diff..." },
  { name: "Dashboard 1", icon: "dash" },
  { name: "KPI" },
  { name: "Gender Wise Counter" },
  { name: "Dashboard 2", icon: "dash", active: true },
  { name: "Story 1", icon: "story" },
];

function TabStrip() {
  return (
    <SheetTabs>
      {tabs.map((t) => (
        <SheetTab key={t.name} $active={t.active} $clip={t.clip} $first={t.first}>
          {t.icon && <Icon w={11}>{tabIcons[t.icon]}</Icon>}
          <span>{t.name}</span>
        </SheetTab>
      ))}
      {Object.keys(addIcons).map((k) => (
        <SheetTab key={k} $iconOnly aria-label={`New ${k}`}>
          <Icon w={15}>{addIcons[k]}<path d="M11 8v6.500M8 11.200h6.500" strokeWidth="1.600" /></Icon>
        </SheetTab>
      ))}
    </SheetTabs>
  );
}

function Status() {
  const step = (d, label) => (
    <button aria-label={label}><Icon w={8} h={8}><path d={d} fill="currentColor" stroke="none" /></Icon></button>
  );
  return (
    <StatusBar>
      <StatusCell $w={118} /><StatusCell $w={26} /><StatusCell $w={26} /><StatusCell $w={44} />
      <StatusCell $w={66}>
        {step("M1 1h1.500v6H1zM7 1v6L3 4z", "First")}
        {step("M6 1v6L2 4z", "Previous")}
        {step("M2 1v6l4-3z", "Next")}
        {step("M5.500 1H7v6H5.500zM1 1v6l4-3z", "Last")}
      </StatusCell>
      <StatusCell $w={63}>
        <Icon w={11}><path d="M0 0h3v3H0zM4 0h3v3H4zM8 0h3v3H8zM0 4h3v3H0zM4 4h3v3H4zM8 4h3v3H8zM0 8h3v3H0zM4 8h3v3H4zM8 8h3v3H8z" fill="#bbb" stroke="none" /></Icon>
        <Icon w={11}><path d="M0 0h11v6.500H0zM0 8h3v3H0zM4 8h3v3H4zM8 8h3v3H8z" fill="#bbb" stroke="none" /></Icon>
        <Icon w={11}><path d="M0 0h11v11H0z" fill="#666" stroke="none" /></Icon>
      </StatusCell>
    </StatusBar>
  );
}

function WindowsTaskbar() {
  return (
    <Taskbar>
      <StartButton aria-label="Start">
        <Icon w={15}><path d="M0 2 6.500 1v6H0zM7.500.9 15 0v7H7.500zM0 8h6.500v6L0 13zM7.500 8H15v7l-7.500-1z" fill="#fff" stroke="none" /></Icon>
      </StartButton>
      <SearchBox>
        <Icon w={20}><circle cx="10" cy="10" r="8.500" stroke="#111" strokeWidth="2.500" /></Icon>
        <SearchInput placeholder="Type here to search" aria-label="Type here to search" />
        <Icon w={13} h={18} sw={1.2}><g stroke="#222"><rect x="4.500" y="1" width="4" height="10" rx="1.500" /><path d="M2 8v4.500c0 1 1 1.500 2 1.500h5c1 0 2-.5 2-1.500V8M6.500 14v3" /></g></Icon>
      </SearchBox>
      <TaskButton aria-label="Task view">
        <Icon w={16} h={16} sw={1.200}><path d="M1 0v3h9V0M1 5.500h9v5H1zM1 16v-3h9v3M14 0v16" /><path d="M12.500 5h3v3h-3z" fill="#fff" stroke="none" /></Icon>
      </TaskButton>
      <TaskButton aria-label="Edge">
        <Icon w={20}><path d="M1 9.200C2 3.800 5.500.8 10.200.8c5.600 0 8.800 3.900 8.800 9v2H7.200c.2 3.200 3 4.500 6 4.500 1.800 0 3.500-.5 5-1.300v3.700c-1.700.9-3.700 1.300-5.900 1.300C6.700 20 3.300 16.800 3.300 12c0-3.200 1.600-5.700 4.400-7.100C5 5.300 2.800 6.500 1 9.200zm6.300-.5h6.500c0-2.300-1.200-3.700-3.100-3.700s-3.100 1.500-3.400 3.700z" fill="#0a7bdc" stroke="none" /></Icon>
      </TaskButton>
      <TaskButton $open aria-label="File Explorer">
        <Icon w={20} h={18}><g stroke="none"><path d="M0 2V0h7l1 2h11v15H0z" fill="#f0b93b" /><path d="M0 4h20v13H0z" fill="#ffe391" /><path d="M3 18v-6a2 2 0 0 1 2-2h10a2 2 0 0 1 2 2v6h-4v-4H7v4z" fill="#3fa7d6" /></g></Icon>
      </TaskButton>
      <TaskButton aria-label="Store">
        <Icon w={20} h={22}><path d="M6 7V4c0-4 8-4 8 0v3" stroke="#fff" strokeWidth="1.400" /><g stroke="none"><path d="M0 6h20v14a2 2 0 0 1-2 2H2a2 2 0 0 1-2-2z" fill="#fff" /><path d="M5 9h4.500v4.500H5z" fill="#f05125" /><path d="M10.500 9H15v4.500h-4.500z" fill="#7fba00" /><path d="M5 14.500h4.500V19H5z" fill="#00a4ef" /><path d="M10.500 14.500H15V19h-4.500z" fill="#ffb900" /></g></Icon>
      </TaskButton>
      <TaskButton aria-label="Mail">
        <Icon w={22} h={19}><path d="M0 7 11 0l11 7v12H0z" fill="#fff" stroke="none" /><path d="M3 7h16l-7.500 4 2 3.500z" fill="#04151b" stroke="none" /></Icon>
      </TaskButton>
      <TaskButton $open $active aria-label="Tableau"><TableauLogo size={21} /></TaskButton>
      <Spacer />
      <Tray>
        <Icon w={15} h={15} sw={1.2}><circle cx="10.500" cy="3.500" r="2.500" /><circle cx="4.500" cy="7.500" r="2.300" /><path d="M1 14.500c0-6 7-6 7 0M8 7.500c2.500-2.500 6-1.500 6 2.500" /></Icon>
        <Spacer />
        <button aria-label="Hidden icons"><Chevron up /></button>
        <Icon w={15} h={9}><path d="M.5.5h12v8H.5zM13 3h1.500v3H13" /><path d="M2 2h5v5H2z" fill="#fff" stroke="none" /></Icon>
        <Icon w={15} h={15} sw={1.100}><circle cx="2.500" cy="2.500" r="1.800" fill="#fff" stroke="none" /><g stroke="#7c868a"><path d="M3 14C3 8 8 3.500 14 3.500M6 14c0-4 4-7.500 8-7.500M9 14c0-2.500 2.500-4.500 5-4.500M12 14c0-1 1-1.500 2-1.500" /></g></Icon>
        <Icon w={17} h={14} sw={1.200}><path d="M1 5h2.500L7 1.500v11L3.500 9H1zM9.500 4.500c1.300 1.500 1.300 3.500 0 5M12 2.800c2.300 2.500 2.300 6 0 8.500M14.300 1c3 3.500 3 8.500 0 12" /></Icon>
        <span>ENG</span>
        <Clock>04:21<br />20-10-2023</Clock>
        <button aria-label="Notifications"><Icon w={17} h={17} sw={1.300}><path d="M1 1h15v12h-4.500L8.500 16l-3-3H1z" /></Icon></button>
      </Tray>
    </Taskbar>
  );
}

export default function App() {
  return (
    <Window>
      <GlobalStyle />
      <TitleBar>
        <TableauLogo />
        <TitleText>Tableau - kavitha new - Tableau license expires in 11 days</TitleText>
        <WindowButton aria-label="Minimize"><Icon w={10}><path d="M0 5h10" stroke="#222" /></Icon></WindowButton>
        <WindowButton aria-label="Restore"><Icon w={10}><path d="M.5 3h6.500v6.500H.5zM2.500 3V.5h7V7.500H7" stroke="#111" strokeWidth="1.300" /></Icon></WindowButton>
        <WindowButton aria-label="Close"><Icon w={10}><path d="M.5.5l9 9M9.500.5l-9 9" stroke="#222" /></Icon></WindowButton>
      </TitleBar>
      <MenuBar>
        {["File", "Data", "Worksheet", "Dashboard", "Story", "Analysis", "Map", "Format", "Server", "Window", "Help"].map((m) => (
          <button key={m}>{m}</button>
        ))}
      </MenuBar>
      <MainToolbar />
      <Body>
        <SidePanel />
        <Dashboard />
        <ScrollTrack $w={16}>
          <ScrollArrow aria-label="Scroll up"><Chevron up small /></ScrollArrow>
          <ScrollThumb $size={386} /><ScrollRest $size={137} />
          <ScrollArrow aria-label="Scroll down"><Chevron small /></ScrollArrow>
        </ScrollTrack>
      </Body>
      <TabStrip />
      <Status />
      <WindowsTaskbar />
    </Window>
  );
}
